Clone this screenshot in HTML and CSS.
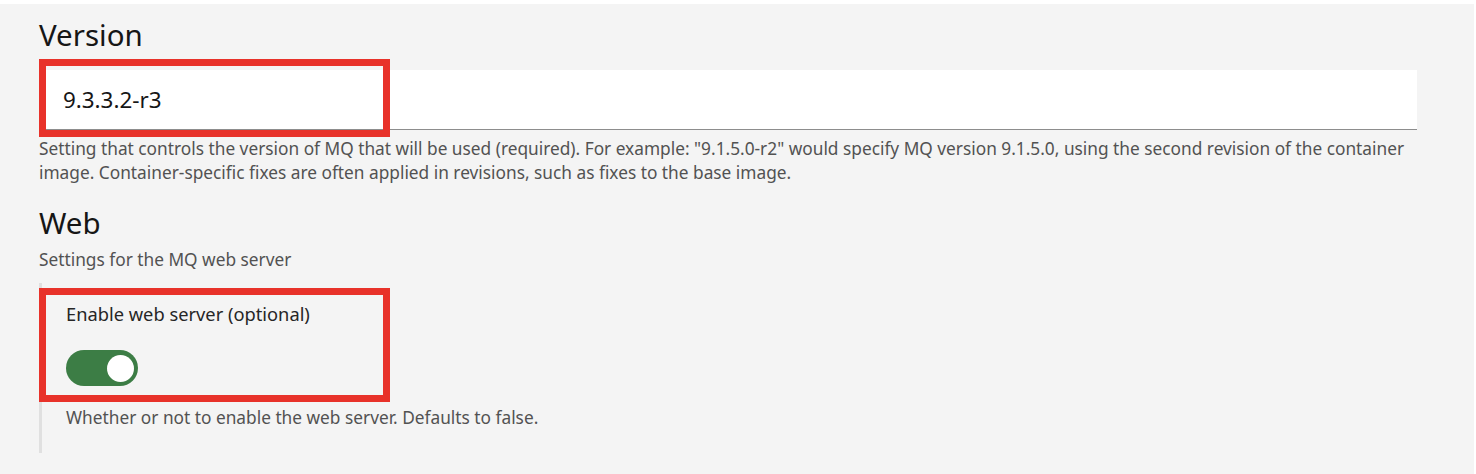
FILE: index.html
```html
<!DOCTYPE html>
<html lang="en">
<head>
<meta charset="utf-8">
<title>MQ settings</title>
<link rel="stylesheet" href="styles.css">
</head>
<body>
<main class="panel">
  <h2 class="section-title">Version</h2>
  <div class="field">
    <div class="text-input">9.3.3.2-r3</div>
    <div class="highlight highlight-input"></div>
  </div>
  <p class="description">Setting that controls the version of MQ that will be used (required). For example: "9.1.5.0-r2" would specify MQ version 9.1.5.0, using the second revision of the container image. Container-specific fixes are often applied in revisions, such as fixes to the base image.</p>

  <h2 class="section-title section-title-web">Web</h2>
  <p class="subtitle">Settings for the MQ web server</p>

  <div class="group">
    <div class="label">Enable web server (optional)</div>
    <div class="toggle"><span class="knob"></span></div>
    <p class="helper">Whether or not to enable the web server. Defaults to false.</p>
    <div class="highlight highlight-toggle"></div>
  </div>
</main>
</body>
</html>
```
FILE: styles.css
```css
html, body {
  margin: 0;
  padding: 0;
  background: #ffffff;
}

body {
  font-family: "Noto Sans", sans-serif;
  color: #161616;
}

.panel {
  margin-top: 4px;
  width: 1474px;
  height: 470px;
  background: #f4f4f4;
  box-sizing: border-box;
  padding: 13px 0 0 39px;
  display: flex;
  flex-direction: column;
  align-items: flex-start;
}

.section-title {
  margin: 0;
  font-size: 29.5px;
  line-height: 36px;
  font-weight: 400;
  color: #161616;
}

.section-title-web {
  margin-top: 20px;
}

.field {
  position: relative;
  margin-top: 17px;
  width: 1378px;
}

.text-input {
  height: 59px;
  background: #ffffff;
  border-bottom: 1px solid #8d8d8d;
  padding-left: 24px;
  display: flex;
  align-items: center;
  font-size: 22.4px;
  color: #161616;
}

.highlight {
  position: absolute;
  box-sizing: border-box;
  border: 7px solid #e8322a;
  width: 351px;
}

.highlight-input {
  left: 0;
  top: -11px;
  height: 78px;
}

.description {
  margin: 7px 0 0 0;
  width: 1378px;
  font-size: 17.3px;
  line-height: 24px;
  color: #525252;
}

.subtitle {
  margin: 7px 0 0 0;
  font-size: 17.3px;
  line-height: 24px;
  color: #525252;
}

.group {
  position: relative;
  margin-top: 11px;
  border-left: 3px solid #e0e0e0;
  padding: 19px 0 23px 24px;
  display: flex;
  flex-direction: column;
  align-items: flex-start;
}

.label {
  font-size: 18.3px;
  line-height: 24px;
  color: #262626;
}

.toggle {
  margin-top: 24px;
  width: 72px;
  height: 36px;
  border-radius: 18px;
  background: #3c7d45;
  position: relative;
}

.knob {
  position: absolute;
  left: 41px;
  top: 4.5px;
  width: 27px;
  height: 27px;
  border-radius: 50%;
  background: #ffffff;
}

.helper {
  margin: 20px 0 0 0;
  font-size: 17.3px;
  line-height: 24px;
  color: #525252;
}

.highlight-toggle {
  left: -3px;
  top: 5px;
  height: 114px;
}
```
